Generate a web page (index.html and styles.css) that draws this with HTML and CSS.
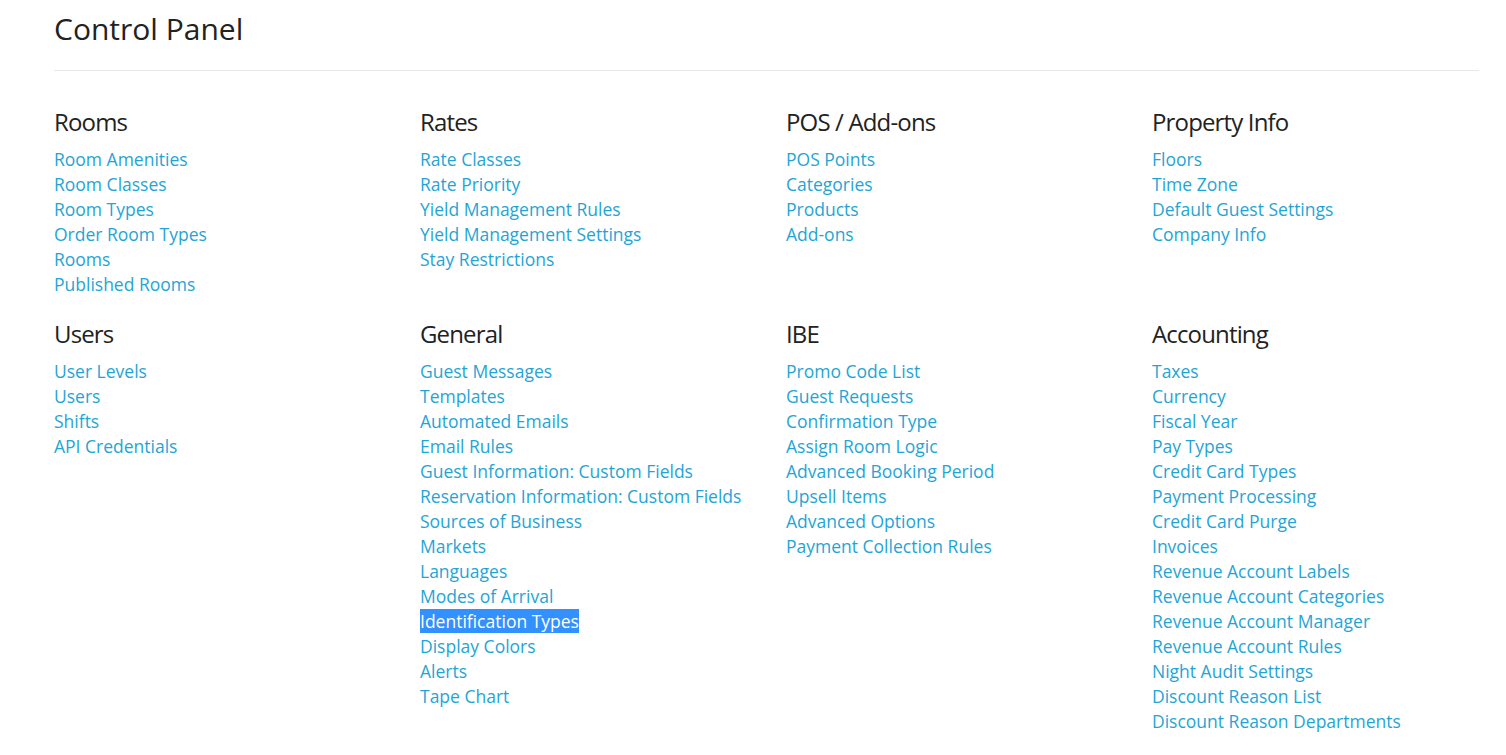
FILE: index.html
```html
<!DOCTYPE html>
<html>
<head>
<meta charset="utf-8">
<link rel="stylesheet" href="styles.css">
</head>
<body>
<div class="page">
  <h1 class="title">Control Panel</h1>
  <div class="divider"></div>
  <div class="grid">
    <section class="group">
      <h2>Rooms</h2>
      <ul>
        <li><a href="#">Room Amenities</a></li>
        <li><a href="#">Room Classes</a></li>
        <li><a href="#">Room Types</a></li>
        <li><a href="#">Order Room Types</a></li>
        <li><a href="#">Rooms</a></li>
        <li><a href="#">Published Rooms</a></li>
      </ul>
    </section>
    <section class="group">
      <h2>Rates</h2>
      <ul>
        <li><a href="#">Rate Classes</a></li>
        <li><a href="#">Rate Priority</a></li>
        <li><a href="#">Yield Management Rules</a></li>
        <li><a href="#">Yield Management Settings</a></li>
        <li><a href="#">Stay Restrictions</a></li>
      </ul>
    </section>
    <section class="group">
      <h2>POS / Add-ons</h2>
      <ul>
        <li><a href="#">POS Points</a></li>
        <li><a href="#">Categories</a></li>
        <li><a href="#">Products</a></li>
        <li><a href="#">Add-ons</a></li>
      </ul>
    </section>
    <section class="group">
      <h2>Property Info</h2>
      <ul>
        <li><a href="#">Floors</a></li>
        <li><a href="#">Time Zone</a></li>
        <li><a href="#">Default Guest Settings</a></li>
        <li><a href="#">Company Info</a></li>
      </ul>
    </section>
    <section class="group">
      <h2>Users</h2>
      <ul>
        <li><a href="#">User Levels</a></li>
        <li><a href="#">Users</a></li>
        <li><a href="#">Shifts</a></li>
        <li><a href="#">API Credentials</a></li>
      </ul>
    </section>
    <section class="group">
      <h2>General</h2>
      <ul>
        <li><a href="#">Guest Messages</a></li>
        <li><a href="#">Templates</a></li>
        <li><a href="#">Automated Emails</a></li>
        <li><a href="#">Email Rules</a></li>
        <li><a href="#">Guest Information: Custom Fields</a></li>
        <li><a href="#">Reservation Information: Custom Fields</a></li>
        <li><a href="#">Sources of Business</a></li>
        <li><a href="#">Markets</a></li>
        <li><a href="#">Languages</a></li>
        <li><a href="#">Modes of Arrival</a></li>
        <li><a href="#" class="selected">Identification Types</a></li>
        <li><a href="#">Display Colors</a></li>
        <li><a href="#">Alerts</a></li>
        <li><a href="#">Tape Chart</a></li>
      </ul>
    </section>
    <section class="group">
      <h2>IBE</h2>
      <ul>
        <li><a href="#">Promo Code List</a></li>
        <li><a href="#">Guest Requests</a></li>
        <li><a href="#">Confirmation Type</a></li>
        <li><a href="#">Assign Room Logic</a></li>
        <li><a href="#">Advanced Booking Period</a></li>
        <li><a href="#">Upsell Items</a></li>
        <li><a href="#">Advanced Options</a></li>
        <li><a href="#">Payment Collection Rules</a></li>
      </ul>
    </section>
    <section class="group">
      <h2>Accounting</h2>
      <ul>
        <li><a href="#">Taxes</a></li>
        <li><a href="#">Currency</a></li>
        <li><a href="#">Fiscal Year</a></li>
        <li><a href="#">Pay Types</a></li>
        <li><a href="#">Credit Card Types</a></li>
        <li><a href="#">Payment Processing</a></li>
        <li><a href="#">Credit Card Purge</a></li>
        <li><a href="#">Invoices</a></li>
        <li><a href="#">Revenue Account Labels</a></li>
        <li><a href="#">Revenue Account Categories</a></li>
        <li><a href="#">Revenue Account Manager</a></li>
        <li><a href="#">Revenue Account Rules</a></li>
        <li><a href="#">Night Audit Settings</a></li>
        <li><a href="#">Discount Reason List</a></li>
        <li><a href="#">Discount Reason Departments</a></li>
      </ul>
    </section>
  </div>
</div>
</body>
</html>
```

FILE: styles.css
```css
html, body {
  margin: 0;
  padding: 0;
  background: #fff;
}
body {
  font-family: "Open Sans", "Liberation Sans", sans-serif;
  color: #222;
  overflow: hidden;
}
.page {
  padding: 0 27px 0 54px;
}
.title {
  margin: 0;
  padding-top: 9px;
  font-size: 30px;
  font-weight: 400;
  line-height: 40px;
  color: #222;
}
.divider {
  margin-top: 21px;
  height: 1px;
  background: #e8e8e8;
  width: 1425px;
}
.grid {
  display: grid;
  grid-template-columns: repeat(4, 366px);
  padding-top: 33px;
  row-gap: 19px;
}
.group h2 {
  margin: 0 0 7px;
  font-size: 24px;
  font-weight: 400;
  letter-spacing: -0.85px;
  line-height: 36px;
  color: #222;
}
.group ul {
  list-style: none;
  margin: 0;
  padding: 0;
}
.group li {
  font-size: 17.5px;
  line-height: 25px;
}
.group a {
  color: #1fa5d5;
  text-decoration: none;
}
.group a.selected {
  background: #3390ff;
  color: #fff;
}
```
